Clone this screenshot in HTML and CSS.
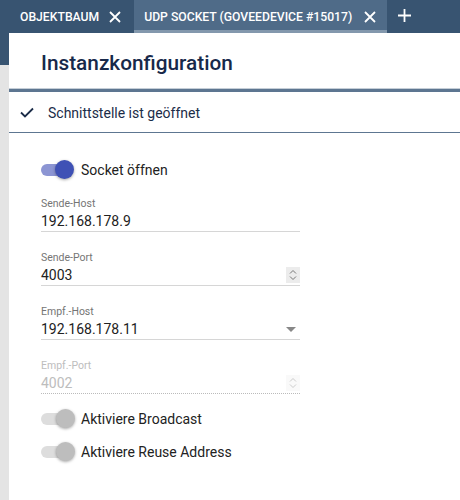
FILE: index.html
```html
<!DOCTYPE html>
<html>
<head>
<meta charset="utf-8">
<link rel="stylesheet" href="styles.css">
</head>
<body>
<div class="tabs">
  <div class="tab">OBJEKTBAUM <span class="x">
    <svg width="12" height="12" viewBox="0 0 12 12"><path d="M1 1L11 11M11 1L1 11" stroke="#fff" stroke-width="1.8"/></svg></span></div>
  <div class="tab active">UDP SOCKET (GOVEEDEVICE #15017) <span class="x">
    <svg width="12" height="12" viewBox="0 0 12 12"><path d="M1 1L11 11M11 1L1 11" stroke="#fff" stroke-width="1.8"/></svg></span></div>
  <div class="plus"><svg width="13" height="13" viewBox="0 0 13 13"><path d="M6.5 0V13M0 6.5H13" stroke="#fff" stroke-width="1.8"/></svg></div>
</div>
<div class="main">
  <div class="side"></div>
  <div class="panel">
    <div class="head"><h1>Instanzkonfiguration</h1></div>
    <div class="status">
      <svg class="check" width="14" height="11" viewBox="0 0 14 11"><path d="M1 5.5L5 9.5L13 1.5" fill="none" stroke="#1b2c48" stroke-width="1.8"/></svg>
      <span>Schnittstelle ist geöffnet</span>
    </div>
    <div class="form">
      <div class="toggle on first"><span class="track"><span class="thumb"></span></span><span class="tl">Socket öffnen</span></div>
      <div class="field">
        <div class="label">Sende-Host</div>
        <div class="value">192.168.178.9</div>
      </div>
      <div class="field">
        <div class="label">Sende-Port</div>
        <div class="value">4003<span class="spin"><svg width="8" height="12" viewBox="0 0 8 12"><path d="M1 4.5L4 1.5L7 4.5M1 7.5L4 10.5L7 7.5" fill="none" stroke="#777" stroke-width="1"/></svg></span></div>
      </div>
      <div class="field">
        <div class="label">Empf.-Host</div>
        <div class="value">192.168.178.11<span class="arrow"></span></div>
      </div>
      <div class="field disabled">
        <div class="label">Empf.-Port</div>
        <div class="value">4002<span class="spin"><svg width="8" height="12" viewBox="0 0 8 12"><path d="M1 4.5L4 1.5L7 4.5M1 7.5L4 10.5L7 7.5" fill="none" stroke="#ccc" stroke-width="1"/></svg></span></div>
      </div>
      <div class="toggle"><span class="track"><span class="thumb"></span></span><span class="tl">Aktiviere Broadcast</span></div>
      <div class="toggle"><span class="track"><span class="thumb"></span></span><span class="tl">Aktiviere Reuse Address</span></div>
    </div>
  </div>
</div>
</body>
</html>
```
FILE: styles.css
```css
* { box-sizing: border-box; }
html, body { margin: 0; padding: 0; }
body {
  width: 460px;
  height: 500px;
  overflow: hidden;
  font-family: Roboto, "Liberation Sans", sans-serif;
  background: #fff;
}
.tabs {
  height: 33px;
  background: #385471;
  display: flex;
  align-items: stretch;
  padding-left: 20px;
}
.tab {
  display: flex;
  align-items: center;
  color: #fff;
  font-size: 12.2px;
  font-weight: 500;
  padding-right: 13px;
}
.tab .x { display: flex; margin-left: 10px; }
.tab.active {
  background: #4f6b88;
  padding: 3px 11px 0 10px;
  border-bottom: 3px solid #8398ad;
}
.tab.active .x { margin-left: 12px; }
.plus { display: flex; align-items: center; padding-left: 11px; padding-bottom: 2px; }
.main { display: flex; height: 467px; }
.side {
  width: 9px;
  background: linear-gradient(#385471 0, #385471 32px, #e4e4e4 32px);
}
.panel { flex: 1; background: #fff; }
.head {
  height: 56px;
  display: flex;
  align-items: center;
  padding-left: 32px;
  border-bottom: 1px solid #c5ced7;
}
h1 {
  margin: 0;
  font-size: 20.8px;
  font-weight: 500;
  color: #17294a;
  padding-top: 4px;
}
.status {
  height: 44px;
  border-top: 3px solid #5d7691;
  border-bottom: 1px solid #5d7691;
  display: flex;
  align-items: center;
  padding-left: 11px;
  padding-top: 1px;
  font-size: 14px;
  color: #1b2c48;
}
.check { margin-right: 14px; }
.form { padding-left: 32px; width: 291px; padding-top: 20px; }
.toggle {
  display: flex;
  align-items: center;
  height: 33px;
  font-size: 14px;
  color: #222;
}
.toggle.first { margin-bottom: 11px; }
.track {
  position: relative;
  width: 30px;
  height: 12px;
  border-radius: 6px;
  background: #ddd;
  margin-right: 10px;
}
.thumb {
  position: absolute;
  top: -4px;
  left: 15px;
  width: 19px;
  height: 19px;
  border-radius: 50%;
  background: #bdbdbd;
  box-shadow: 0 1px 3px rgba(0,0,0,0.35);
}
.toggle.on .track { background: #8c95d3; }
.toggle.on .thumb { background: #3f51b5; left: 14px; }
.field { margin-bottom: 19px; }
.field.disabled { margin-bottom: 8px; }
.label { font-size: 10.5px; color: #757575; height: 14px; line-height: 14px; }
.value {
  display: flex;
  align-items: center;
  justify-content: space-between;
  height: 21px;
  font-size: 14px;
  color: #222;
  border-bottom: 1px solid #d6d6d6;
}
.spin {
  display: flex;
  align-items: center;
  justify-content: center;
  width: 14px;
  height: 16px;
  background: #ececec;
}
.arrow {
  width: 0; height: 0;
  border-left: 5px solid transparent;
  border-right: 5px solid transparent;
  border-top: 5px solid #888;
  margin-right: 4px;
}
.disabled .label { color: #bdbdbd; }
.disabled .value { color: #bdbdbd; border-bottom: 1px dotted #bbb; }
.disabled .spin { background: #f9f9f9; }
```
